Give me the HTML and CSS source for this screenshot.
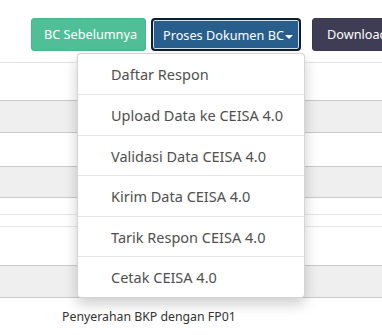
FILE: index.html
```html
<!DOCTYPE html>
<html>
<head>
<meta charset="utf-8">
<link rel="stylesheet" href="styles.css">
</head>
<body>
<div class="page">
  <div class="toolbar">
    <button class="btn btn-green">BC Sebelumnya</button>
    <div class="btn-group">
      <button class="btn btn-blue">Proses Dokumen BC<span class="caret"></span></button>
      <ul class="menu">
        <li>Daftar Respon</li>
        <li>Upload Data ke CEISA 4.0</li>
        <li>Validasi Data CEISA 4.0</li>
        <li>Kirim Data CEISA 4.0</li>
        <li>Tarik Respon CEISA 4.0</li>
        <li>Cetak CEISA 4.0</li>
      </ul>
    </div>
    <button class="btn btn-dark">Download</button>
  </div>
  <div class="table">
    <div class="row r1"></div>
    <div class="row r2 gray"></div>
    <div class="row r3"></div>
    <div class="row r4 gray"></div>
    <div class="row r5"></div>
    <div class="row r6"></div>
    <div class="row r7"></div>
    <div class="row r8 gray"></div>
    <div class="row r9"><span class="cell">Penyerahan BKP dengan FP01</span></div>
  </div>
</div>
</body>
</html>
```

FILE: styles.css
```css
* { box-sizing: border-box; }
html, body { margin: 0; padding: 0; background: #fff; }
body { font-family: "Noto Sans", "Open Sans", sans-serif; overflow: hidden; width: 382px; height: 335px; }
.page { width: 382px; }
.toolbar {
  display: flex;
  align-items: flex-start;
  padding: 18px 0 0 31px;
  height: 62px;
  white-space: nowrap;
}
.btn {
  font-family: inherit;
  font-size: 12.7px;
  height: 33px;
  border-radius: 3px;
  border: 1px solid transparent;
  color: #fff;
  padding: 0 12px;
  line-height: 31px;
  flex: none;
}
.btn-green { background: #50bf97; border-color: #4ab690; width: 115px; margin-right: 5px; }
.btn-group { position: relative; margin-right: 11px; }
.btn-blue {
  background: #285e8c;
  border: 2px solid #0e1e2b;
  box-shadow: inset 0 0 0 1px #d6e0ea;
  width: 150px;
  padding: 0 8px 0 10px;
  text-align: left;
  border-radius: 4px;
}
.caret {
  display: inline-block;
  width: 0; height: 0;
  border-left: 4px solid transparent;
  border-right: 4px solid transparent;
  border-top: 4px solid #fff;
  vertical-align: middle;
  margin-left: 1px;
}
.btn-dark { background: #3f3c55; border-color: #3a374f; width: 100px; text-align: left; padding-left: 14px; }
.menu {
  position: absolute;
  top: 35px;
  left: -74px;
  width: 228px;
  margin: 0;
  padding: 0;
  list-style: none;
  background: #fff;
  border: 1px solid rgba(0,0,0,0.17);
  border-radius: 4px;
  box-shadow: 0 6px 14px rgba(0,0,0,0.2);
  z-index: 5;
}
.menu li {
  height: 40.6px;
  line-height: 40px;
  padding-left: 33px;
  font-size: 14.5px;
  color: #4f4f4f;
  border-top: 1px solid #e5e5e5;
}
.menu li:first-child { border-top: none; height: 40px; }
.table { border-top: 1px solid #e4e4e4; }
.row { border-bottom: 1px solid #dcdcdc; }
.gray { background: #efefef; border-bottom-color: #c9c9c9; }
.r1 { height: 38px; border-bottom-color: #c9c9c9; }
.r2 { height: 32px; }
.r3 { height: 34px; border-bottom-color: #c9c9c9; }
.r4 { height: 31px; }
.r5 { height: 17px; border-bottom-color: #e6e6e6; }
.r6 { height: 12px; border-bottom-color: #e6e6e6; }
.r7 { height: 39px; border-bottom-color: #c9c9c9; }
.r8 { height: 32px; }
.r9 { border: none; padding: 10px 0 0 62px; font-size: 12.3px; color: #333; }
```
